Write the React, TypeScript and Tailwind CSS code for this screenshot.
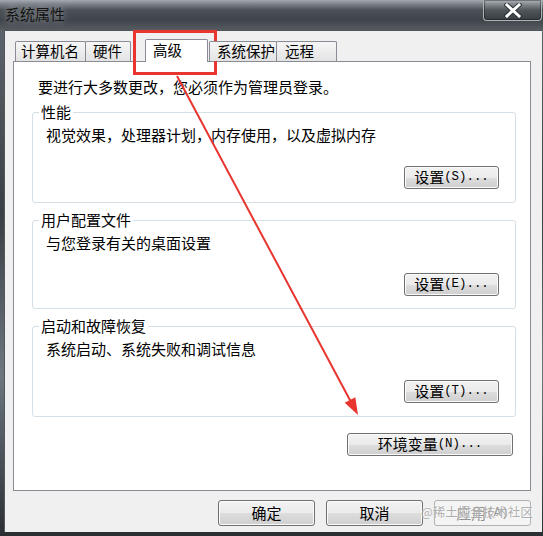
const mono = "font-['Liberation_Mono',monospace] text-[12.4px]";

type BtnProps = {
  main: string;
  hot?: string;
  className: string;
  disabled?: boolean;
};

const WinButton = ({ main, hot, className, disabled }: BtnProps) => (
  <button
    className={
      disabled
        ? `flex items-center justify-center rounded-[3px] border border-[#adb2b5] bg-[#f4f4f4] text-[15px] text-[#8d8d8d] ${className}`
        : `flex items-center justify-center rounded-[3px] border border-[#707070] bg-[linear-gradient(180deg,#f2f2f2_0%,#ebebeb_50%,#dddddd_52%,#cfcfcf_100%)] shadow-[inset_0_0_0_1px_#fbfbfb] text-[15px] text-black ${className}`
    }
  >
    <span>{main}</span>
    {hot && <span className={mono}>{hot}</span>}
  </button>
);

type GroupProps = {
  title: string;
  desc: string;
  hot: string;
  className: string;
};

const Group = ({ title, desc, hot, className }: GroupProps) => (
  <div className={`flex flex-col rounded-[3px] border border-[#d5dfe5] ${className}`}>
    <span className="-mt-[11px] ml-[6px] w-fit bg-white px-[2px] leading-[20px]">{title}</span>
    <span className="ml-[13px] mt-[3px] leading-[20px]">{desc}</span>
    <WinButton main="设置" hot={hot} className="mr-[16px] mt-auto h-[23px] w-[95px] self-end" />
  </div>
);

const tabBase =
  'mb-px flex h-[20px] items-center overflow-hidden whitespace-nowrap rounded-t-[2px] border border-b-0 border-[#898c95] bg-[linear-gradient(180deg,#f6f6f6,#e3e3e3)] text-[14.5px] leading-none';

export default function App() {
  return (
    <div className="relative flex h-[536px] w-[543px] flex-col overflow-hidden bg-[linear-gradient(180deg,#626970_0%,#3a3f45_40%,#6d767e_70%,#2b2f34_100%)] font-['Noto_Sans_CJK_SC','Noto_Sans',sans-serif] text-[15px] text-black">
      {/* title bar */}
      <div className="flex h-[30px] shrink-0 items-start justify-between bg-[linear-gradient(180deg,#a4aab0_0px,#7c838a_4px,#4b5157_10px,#3f454b_20px,#555b61_30px)]">
        <span className="pl-[5px] leading-[28px] text-[#141414] [text-shadow:0_0_6px_rgba(255,255,255,0.55)]">
          系统属性
        </span>
        <div className="mr-[1px] flex h-[21px] w-[59px] items-center justify-center rounded-b-[4px] border border-t-0 border-[#aeb4ba] bg-[linear-gradient(180deg,rgba(255,255,255,0.12),rgba(0,0,0,0.12))] shadow-[inset_0_0_0_1px_rgba(0,0,0,0.35)]">
          <svg width="18" height="15" viewBox="0 0 18 15">
            <path d="M3 2 L15 13 M15 2 L3 13" stroke="#30353a" strokeWidth="5" strokeLinecap="square" />
            <path d="M3 2 L15 13 M15 2 L3 13" stroke="#ffffff" strokeWidth="3" strokeLinecap="square" />
          </svg>
        </div>
      </div>

      {/* client area */}
      <div className="mb-[4px] ml-[4px] mr-[1px] flex flex-1 flex-col border-l border-t border-[#50565c] bg-[#f0f0f0] pl-[8px] pr-[11px] pt-[8px]">
        {/* tabs */}
        <div className="relative z-10 -mb-px flex h-[23px] items-end pl-[2px]">
          <div className={`${tabBase} w-[71px] pl-[5px]`}>计算机名</div>
          <div className={`${tabBase} -ml-px w-[46px] pl-[7px]`}>硬件</div>
          <div className="ml-[14px] flex h-[23px] w-[63px] items-center whitespace-nowrap rounded-t-[2px] border border-b-0 border-[#898c95] bg-white pb-[2px] pl-[7px] text-[14.5px] leading-none">
            高级
          </div>
          <div className={`${tabBase} ml-px w-[68px] pl-[7px]`}>系统保护</div>
          <div className={`${tabBase} -ml-px w-[61px] pl-[8px]`}>远程</div>
        </div>

        {/* tab panel */}
        <div className="flex h-[430px] flex-col border border-[#898c95] bg-white pl-[18px] pr-[14px] pt-[15px]">
          <p className="ml-[6px] leading-[20px]">要进行大多数更改，您必须作为管理员登录。</p>
          <Group
            title="性能"
            desc="视觉效果，处理器计划，内存使用，以及虚拟内存"
            hot="(S)..."
            className="mt-[15px] h-[91px] pb-[13px]"
          />
          <Group
            title="用户配置文件"
            desc="与您登录有关的桌面设置"
            hot="(E)..."
            className="mt-[17px] h-[89px] pb-[12px]"
          />
          <Group
            title="启动和故障恢复"
            desc="系统启动、系统失败和调试信息"
            hot="(T)..."
            className="mt-[17px] h-[91px] pb-[13px]"
          />
          <WinButton
            main="环境变量"
            hot="(N)..."
            className="mr-[3px] mt-[16px] h-[23px] w-[166px] self-end"
          />
        </div>

        {/* dialog buttons */}
        <div className="mt-[9px] flex justify-end gap-[11px]">
          <WinButton main="确定" className="h-[26px] w-[97px]" />
          <WinButton main="取消" className="h-[26px] w-[97px]" />
          <WinButton main="应用" hot="(A)" disabled className="h-[26px] w-[97px]" />
        </div>
      </div>

      {/* annotation: red box + arrow */}
      <div className="pointer-events-none absolute left-[133px] top-[30px] h-[45px] w-[84px] border-[3px] border-[#e8352f]" />
      <svg
        className="pointer-events-none absolute left-0 top-0"
        width="543"
        height="536"
        viewBox="0 0 543 536"
      >
        <line x1="177" y1="76" x2="351" y2="402" stroke="#e8352f" strokeWidth="2" />
        <polygon points="358,415 344.7,402.8 355.3,397.2" fill="#e8352f" />
      </svg>

      {/* watermark */}
      <span className="pointer-events-none absolute left-[421px] top-[503px] text-[12.5px] leading-[18px] text-[#9a9a9a]/80 [text-shadow:0_0_2px_#ffffff]">
        @稀土掘金技术社区
      </span>
    </div>
  );
}
